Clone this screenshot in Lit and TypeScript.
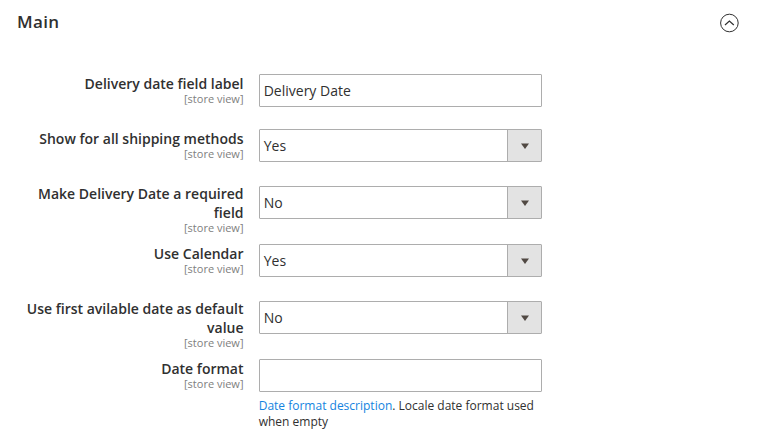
import { LitElement, html, css } from "lit";
import { customElement } from "lit/decorators.js";

interface Field {
  label: string;
  kind: "text" | "select";
  value: string;
  height: number;
  offset: number;
  note?: boolean;
}

const fields: Field[] = [
  { label: "Delivery date field label", kind: "text", value: "Delivery Date", height: 55, offset: 0 },
  { label: "Show for all shipping methods", kind: "select", value: "Yes", height: 55, offset: 0 },
  { label: "Make Delivery Date a required field", kind: "select", value: "No", height: 60, offset: 2 },
  { label: "Use Calendar", kind: "select", value: "Yes", height: 55, offset: 0 },
  { label: "Use first avilable date as default value", kind: "select", value: "No", height: 60, offset: 2 },
  { label: "Date format", kind: "text", value: "", height: 80, offset: 0, note: true },
];

@customElement("app-root")
export class AppRoot extends LitElement {
  static styles = css`
    :host {
      display: block;
      box-sizing: border-box;
      height: 445px;
      overflow: hidden;
      background: #fff;
      color: #303030;
      font: 14px/19px "Open Sans", sans-serif;
    }
    header {
      display: flex;
      justify-content: space-between;
      height: 74px;
      box-sizing: border-box;
      padding: 10px 21px 0 17px;
    }
    h1 {
      margin: 0;
      font-size: 17px;
      line-height: 23px;
      font-weight: 600;
      letter-spacing: 0.35px;
    }
    .toggle {
      width: 20px;
      height: 20px;
      margin-top: 3px;
    }
    .row {
      display: grid;
      grid-template-columns: 243.5px 283px;
      column-gap: 15.5px;
    }
    .label {
      text-align: right;
      font-weight: 600;
      padding-left: 20px;
    }
    .scope {
      display: block;
      font-size: 11px;
      line-height: 12px;
      font-weight: 400;
      color: #808080;
    }
    .control {
      display: flex;
      box-sizing: border-box;
      height: 33px;
      border: 1px solid #adadad;
      border-radius: 1px;
      line-height: 31px;
      padding-left: 3.7px;
    }
    .value {
      flex: 1;
    }
    .arrow {
      width: 33px;
      border-left: 1px solid #adadad;
      background: #e3e3e3;
      display: flex;
      align-items: center;
      justify-content: center;
    }
    .arrow svg {
      margin-left: 1px;
    }
    .note {
      margin-top: 6px;
      font-size: 12px;
      line-height: 16px;
      margin-left: -0.3px;
    }
    .link {
      color: #1484e0;
    }
  `;

  render() {
    return html`
      <header>
        <h1>Main</h1>
        <svg class="toggle" viewBox="0 0 20 20" fill="none" stroke="#303030">
          <circle cx="10.4" cy="10" r="8.8" stroke-width="1" />
          <path d="M6 12 L10.4 8 L14.8 12" stroke-width="1.2" />
        </svg>
      </header>
      ${fields.map(
        (f) => html`
          <div class="row" style="height:${f.height}px">
            <div class="label">${f.label}<span class="scope">[store view]</span></div>
            <div style="padding-top:${f.offset}px">
              <div class="control">
                <span class="value">${f.value}</span>
                ${f.kind === "select"
                  ? html`<span class="arrow"><svg width="8" height="6" viewBox="0 0 8 6"><path d="M0 0.5H8L4 6Z" fill="#514943" /></svg></span>`
                  : ""}
              </div>
              ${f.note
                ? html`<div class="note"><span class="link">Date format description</span>. Locale date format used when empty</div>`
                : ""}
            </div>
          </div>
        `
      )}
    `;
  }
}
